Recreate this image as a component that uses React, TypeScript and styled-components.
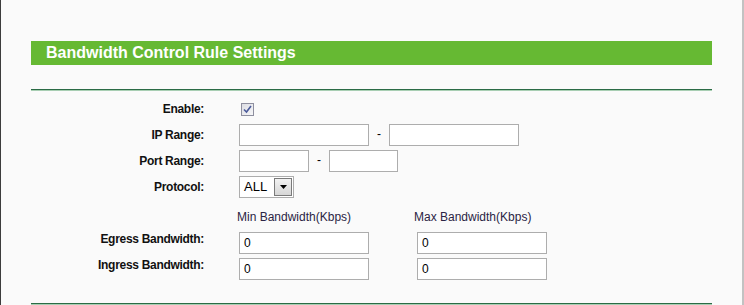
import styled, { createGlobalStyle } from 'styled-components';

const GlobalStyle = createGlobalStyle`
  html, body {
    margin: 0;
    padding: 0;
    background: #fafafa;
  }
  body {
    font-family: "Liberation Sans", Arial, sans-serif;
    font-size: 12px;
  }
`;

const Page = styled.div`
  box-sizing: border-box;
  width: 744px;
  height: 305px;
  overflow: hidden;
  background: #fafafa;
  border-left: 1px solid #3c3c3c;
  border-right: 2px solid #c2c2c2;
  padding: 41px 0 0 30px;
`;

const Panel = styled.div`
  width: 681px;
`;

const TitleBar = styled.div`
  height: 24px;
  background: #66b933;
  color: #fff;
  font-weight: bold;
  font-size: 16px;
  line-height: 24px;
  padding-left: 15px;
`;

const Divider = styled.div`
  margin-top: 24px;
  height: 1px;
  background: #2b6b45;
  border-bottom: 1px solid #a8ceb3;
`;

const Form = styled.div`
  display: grid;
  grid-template-columns: 174px 1fr;
  column-gap: 34px;
  grid-auto-rows: 26px;
  margin-top: 7px;
`;

const Label = styled.div`
  text-align: right;
  font-weight: bold;
  letter-spacing: -0.3px;
  color: #111;
  line-height: 22px;
  padding-right: 1px;
`;

const Cell = styled.div`
  display: flex;
  align-items: flex-start;
`;

const Input = styled.div<{ $w: number }>`
  box-sizing: border-box;
  width: ${p => p.$w}px;
  height: 22px;
  border: 1px solid #adadad;
  background: #fff;
  color: #000;
  padding-left: 4px;
  line-height: 20px;
`;

const Dash = styled.span`
  width: 20px;
  text-align: center;
  line-height: 20px;
  color: #000;
`;

const Check = styled.span`
  box-sizing: border-box;
  margin: 5px 0 0 2px;
  width: 13px;
  height: 13px;
  border: 1px solid #8e8f9f;
  background: linear-gradient(135deg, #dcdde3, #f6f6f8);
  display: flex;
  align-items: center;
  justify-content: center;
`;

const Select = styled.div`
  box-sizing: border-box;
  width: 55px;
  height: 22px;
  border: 1px solid #adadad;
  background: #fff;
  display: flex;
  align-items: stretch;
`;

const SelectText = styled.span`
  flex: 1;
  padding-left: 4px;
  font-size: 13px;
  line-height: 20px;
  color: #000;
`;

const SelectButton = styled.span`
  box-sizing: border-box;
  width: 18px;
  margin: 1px;
  border: 1px solid #7a7a7a;
  background: linear-gradient(#f2f2f2, #d6d6d6);
  display: flex;
  align-items: center;
  justify-content: center;
`;

const Bandwidth = styled.div`
  display: grid;
  grid-template-columns: 178px 130px;
  align-items: end;
`;

const ColHead = styled.div<{ $shift: number }>`
  margin-left: ${p => p.$shift}px;
  color: #2a2444;
  line-height: 22px;
`;

const BottomLine = styled(Divider)`
  margin-top: 23px;
`;

function App() {
  return (
    <Page>
      <GlobalStyle />
      <Panel>
        <TitleBar>Bandwidth Control Rule Settings</TitleBar>
        <Divider />
        <Form>
          <Label>Enable:</Label>
          <Cell>
            <Check>
              <svg width="9" height="9" viewBox="0 0 9 9">
                <path d="M1 4.5 L3.5 7 L8 1" fill="none" stroke="#4a5a9a" strokeWidth="1.6" />
              </svg>
            </Check>
          </Cell>

          <Label>IP Range:</Label>
          <Cell>
            <Input $w={130} />
            <Dash>-</Dash>
            <Input $w={130} />
          </Cell>

          <Label>Port Range:</Label>
          <Cell>
            <Input $w={70} />
            <Dash>-</Dash>
            <Input $w={69} />
          </Cell>

          <Label>Protocol:</Label>
          <Cell>
            <Select>
              <SelectText>ALL</SelectText>
              <SelectButton>
                <svg width="7" height="4" viewBox="0 0 7 4">
                  <path d="M0 0 H7 L3.5 4 Z" fill="#000" />
                </svg>
              </SelectButton>
            </Select>
          </Cell>

          <div />
          <Bandwidth>
            <ColHead $shift={-2}>Min Bandwidth(Kbps)</ColHead>
            <ColHead $shift={-3}>Max Bandwidth(Kbps)</ColHead>
          </Bandwidth>

          <Label>Egress Bandwidth:</Label>
          <Bandwidth>
            <Input $w={130}>0</Input>
            <Input $w={130}>0</Input>
          </Bandwidth>

          <Label>Ingress Bandwidth:</Label>
          <Bandwidth>
            <Input $w={130}>0</Input>
            <Input $w={130}>0</Input>
          </Bandwidth>
        </Form>
        <BottomLine />
      </Panel>
    </Page>
  );
}

export default App
